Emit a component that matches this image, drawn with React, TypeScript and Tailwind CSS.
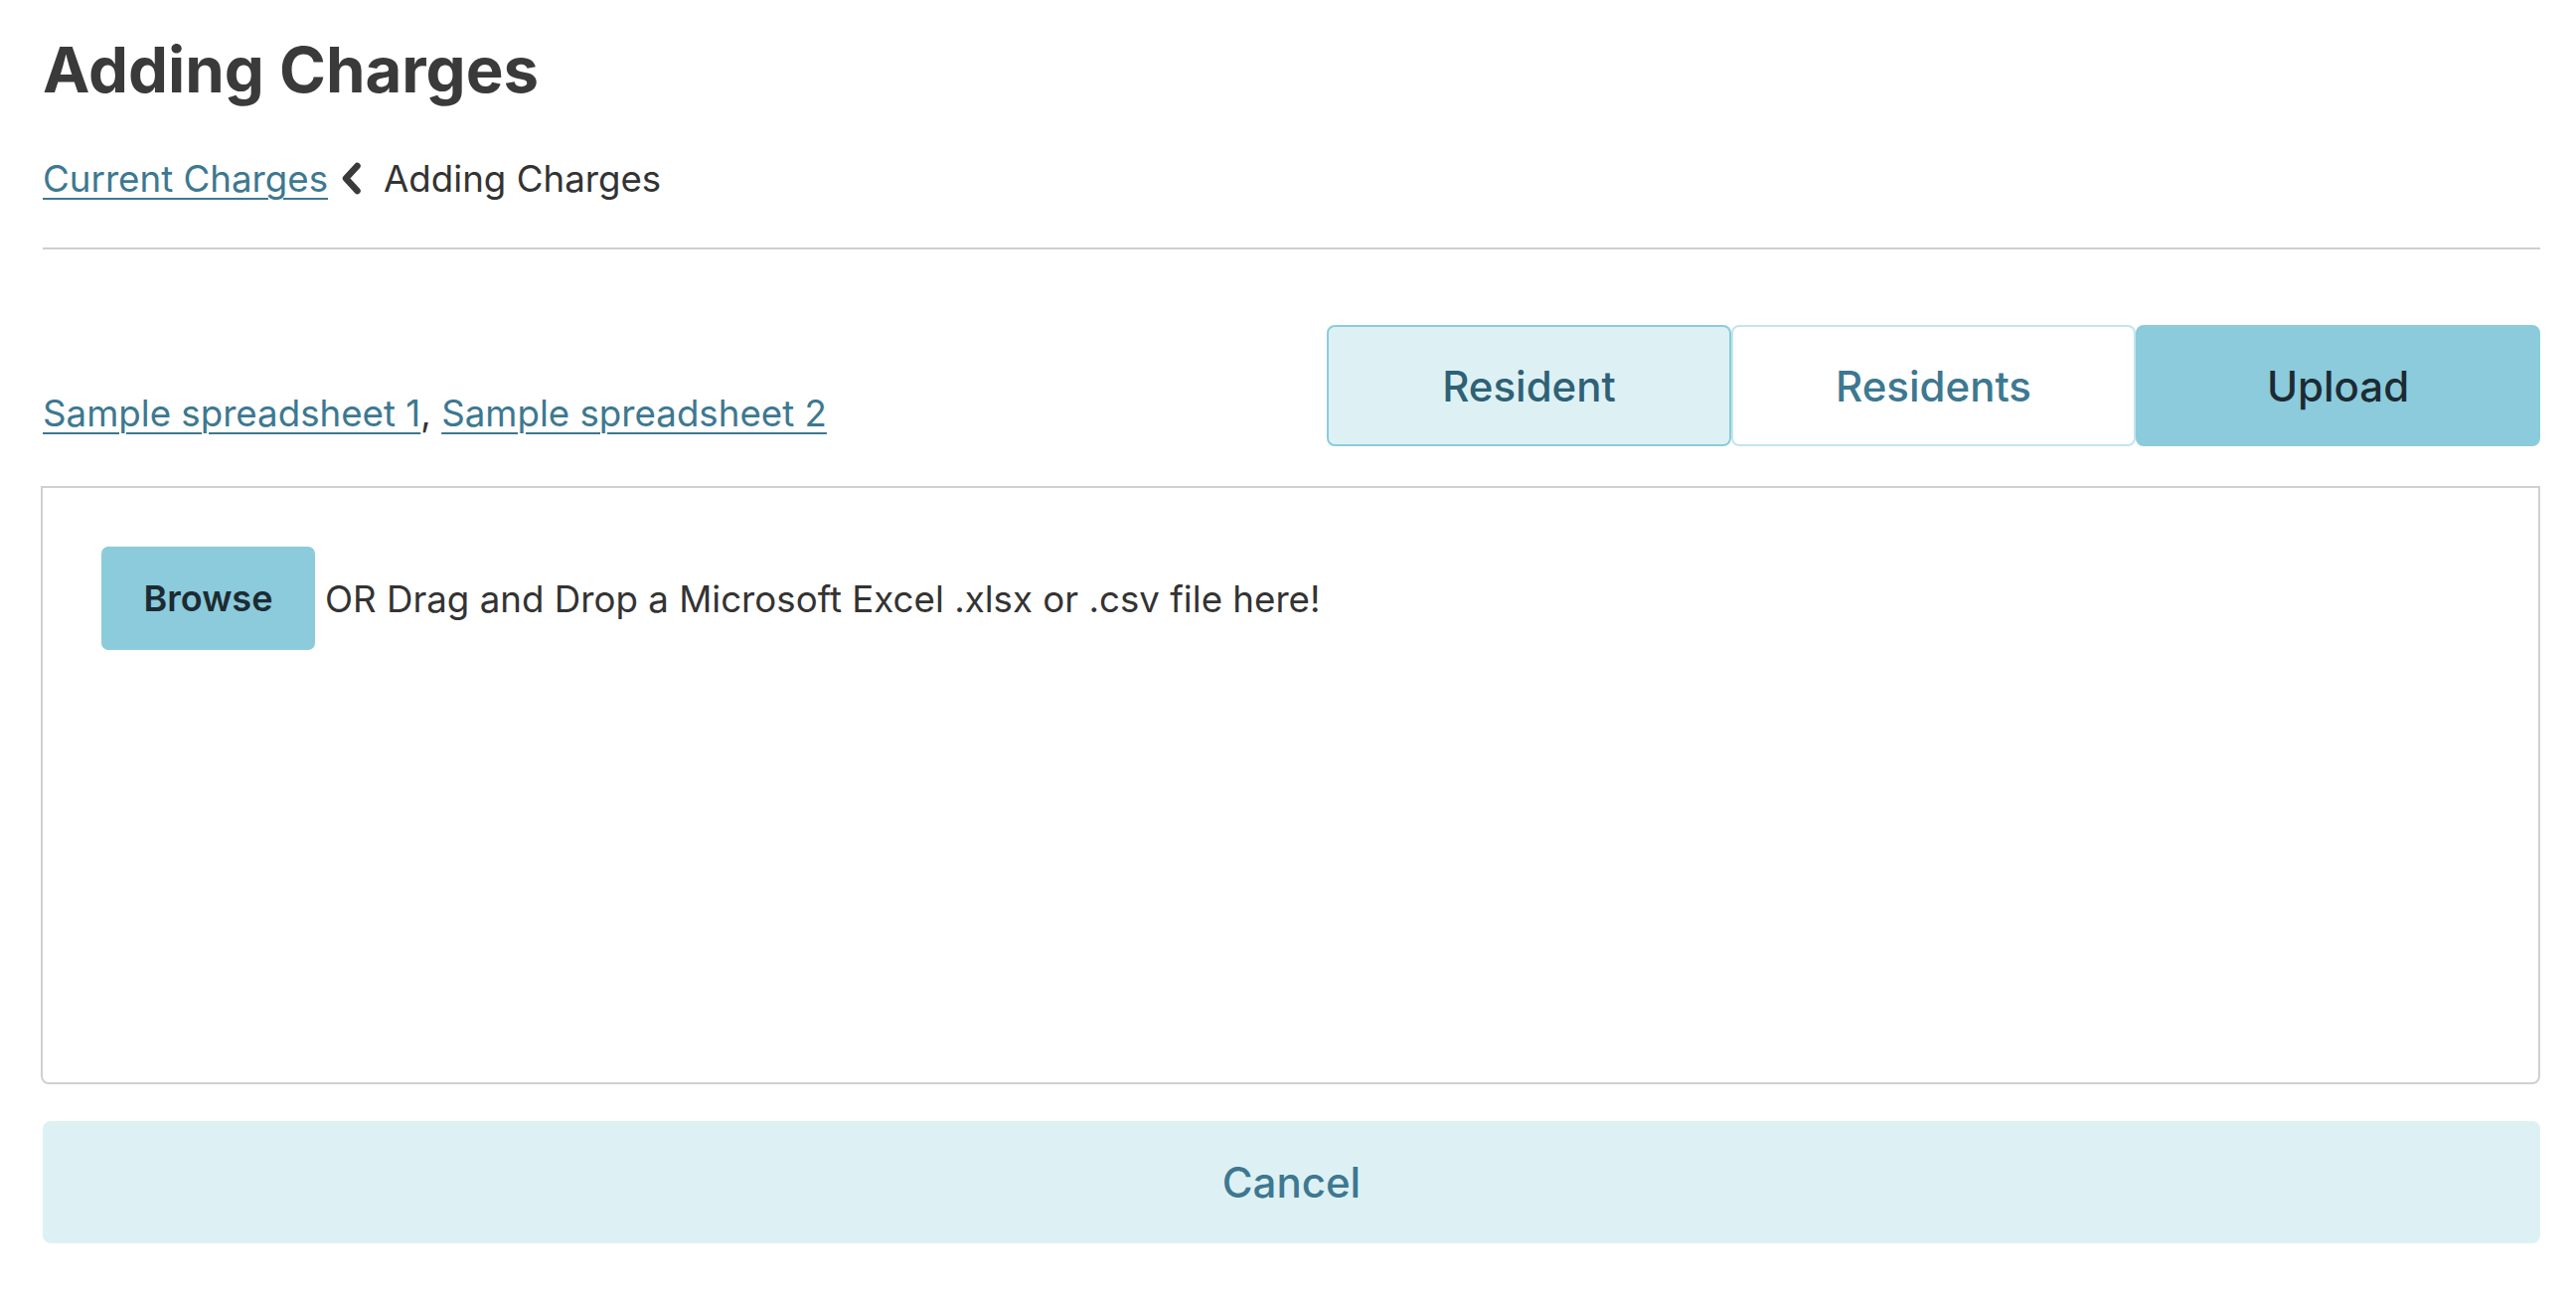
const tabs = [
  { label: "Resident", className: "bg-[#ddf1f5] border-[#8ccbdb] text-[#2f6176]" },
  { label: "Residents", className: "bg-white border-[#c4e4ec] text-[#3d7891]" },
  { label: "Upload", className: "bg-[#8bcbdb] border-[#8bcbdb] text-[#1c2b33]" },
];

export default function App() {
  return (
    <div className="min-h-screen bg-white pl-[43px] pr-[36px] font-['Inter','Liberation_Sans',sans-serif] text-[36.7px] text-[#333333]">
      <h1 className="pt-[32px] text-[63.5px] font-bold leading-[1.2] text-[#3a3a3a]">Adding Charges</h1>

      <nav className="mt-[44px] flex items-center leading-[1.5]">
        <a href="#" className="text-[#3d7891] underline decoration-2 underline-offset-[6px]">
          Current Charges
        </a>
        <svg viewBox="0 0 22 33" className="ml-[12px] mr-[22px] h-[33px] w-[22px]" fill="none" stroke="#3a3a3a" strokeWidth="6.5" strokeLinecap="round" strokeLinejoin="round">
          <path d="M17.5 4 L6 16.5 L17.5 29" />
        </svg>
        <span>Adding Charges</span>
      </nav>

      <hr className="mt-[42px] border-t-2 border-[#cfcfcf]" />

      <div className="mt-[76px] flex items-end justify-between">
        <div className="pb-[6px] leading-[1.5]">
          <a href="#" className="text-[#3d7891] underline decoration-2 underline-offset-[6px]">
            Sample spreadsheet 1
          </a>
          ,{" "}
          <a href="#" className="text-[#3d7891] underline decoration-2 underline-offset-[6px]">
            Sample spreadsheet 2
          </a>
        </div>
        <div className="flex">
          {tabs.map((t) => (
            <button
              key={t.label}
              className={`h-[122px] w-[407px] rounded-[8px] border-2 text-[42px] font-medium ${t.className}`}
            >
              {t.label}
            </button>
          ))}
        </div>
      </div>

      <div className="-ml-[2px] mt-[40px] h-[602px] rounded-b-[8px] border-2 border-[#d0d0d0] pl-[59px] pt-[59px]">
        <div className="flex items-center">
          <button className="h-[104px] w-[215px] rounded-[7px] bg-[#8bcbdb] text-[36px] font-semibold text-[#1c2b33]">
            Browse
          </button>
          <span className="ml-[10px]">OR Drag and Drop a Microsoft Excel .xlsx or .csv file here!</span>
        </div>
      </div>

      <button className="mt-[37px] h-[123px] w-full rounded-[8px] bg-[#ddf1f5] text-[42px] font-medium text-[#3d7891]">
        Cancel
      </button>
    </div>
  );
}
